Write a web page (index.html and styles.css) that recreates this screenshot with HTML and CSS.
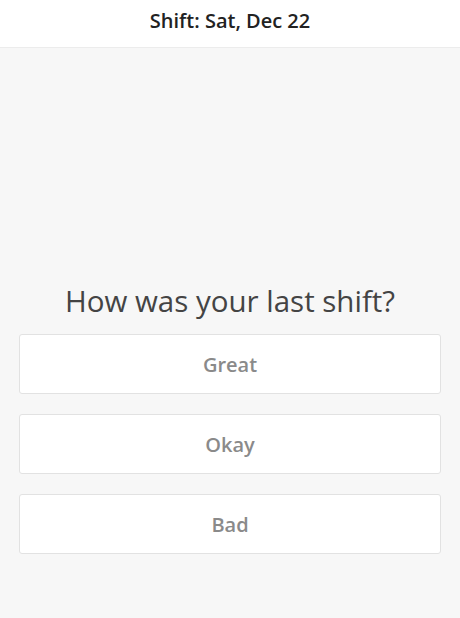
FILE: index.html
```html
<!DOCTYPE html>
<html lang="en">

<head>
    <meta charset="UTF-8">
    <meta name="viewport" content="width=device-width, initial-scale=1.0">
    <link rel="stylesheet" href="styles.css">
</head>

<body>

    <header class="top-bar">
        <h1 class="top-title">Shift: Sat, Dec 22</h1>
    </header>

    <main class="survey">
        <h2 class="question">How was your last shift?</h2>
        <div class="answers">
            <button class="answer">Great</button>
            <button class="answer">Okay</button>
            <button class="answer">Bad</button>
        </div>
    </main>

</body>

</html>
```

FILE: styles.css
```css
body {
    margin: 0;
    font-family: 'Open Sans', sans-serif;
    background: #f7f7f7;
}

.top-bar {
    height: 47px;
    background: #fff;
    border-bottom: 1px solid #ececec;
    display: flex;
    align-items: center;
    justify-content: center;
}

.top-title {
    margin: 0;
    font-size: 20px;
    font-weight: 600;
    color: #222;
    padding-bottom: 6px;
}

.survey {
    padding: 234px 19px 0;
}

.question {
    margin: 0 0 15px;
    font-size: 29.5px;
    line-height: 37px;
    font-weight: 400;
    color: #444;
    text-align: center;
}

.answers {
    display: flex;
    flex-direction: column;
    gap: 20px;
}

.answer {
    height: 60px;
    background: #fff;
    border: 1px solid #e2e2e2;
    border-radius: 3px;
    font-family: 'Open Sans', sans-serif;
    font-size: 20px;
    font-weight: 600;
    color: #8a8a8a;
    cursor: pointer;
}
```
